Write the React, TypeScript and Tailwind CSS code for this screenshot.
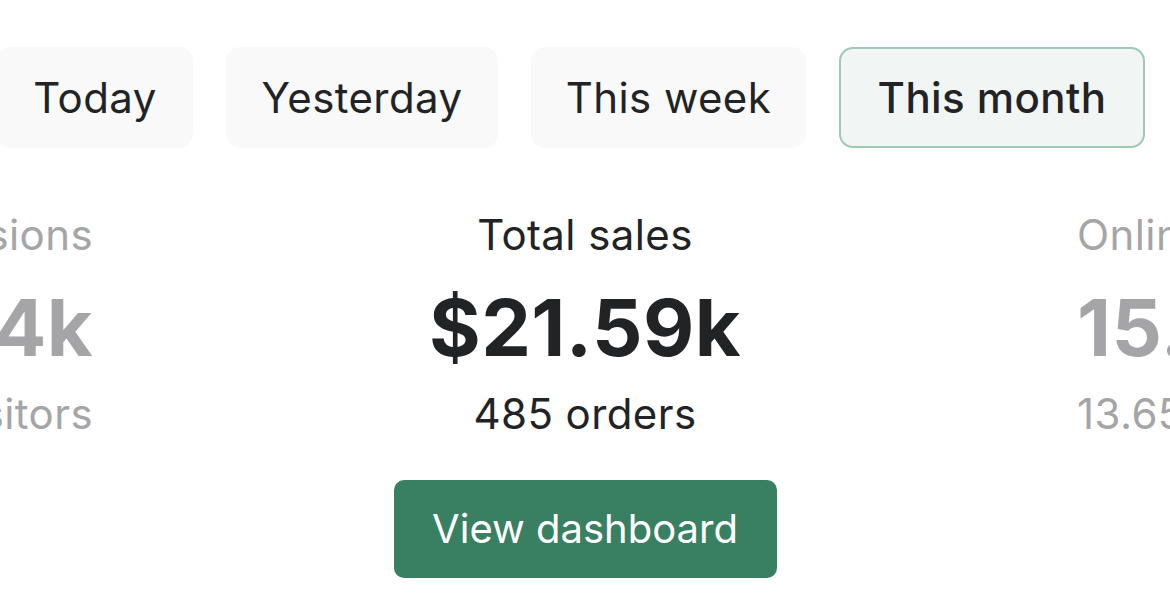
import React, { useState } from 'react';

const ranges = [
  { label: 'Today', width: 'w-[196px]' },
  { label: 'Yesterday', width: 'w-[272px]' },
  { label: 'This week', width: 'w-[275px]' },
  { label: 'This month', width: 'w-[306px]' },
];

const App: React.FC = () => {
  const [active, setActive] = useState('This month');

  return (
    <div
      className="w-[1170px] h-[612px] overflow-hidden bg-white text-[#222325]"
      style={{ fontFamily: 'Inter, "Noto Sans", sans-serif' }}
    >
      <div className="flex gap-[33px] ml-[-3px] mt-[47px]">
        {ranges.map((r) => (
          <button
            key={r.label}
            onClick={() => setActive(r.label)}
            className={`${r.width} h-[101px] shrink-0 rounded-[14px] text-[42px] tracking-[0.01em] leading-none ${
              active === r.label
                ? 'bg-[#f1f6f4] border-2 border-[#9dcab5] font-medium'
                : 'bg-[#f9f9f9] border-2 border-transparent'
            }`}
          >
            {r.label}
          </button>
        ))}
      </div>

      <div className="flex items-start mt-[63px] whitespace-nowrap">
        <div className="w-[93px] shrink-0 flex flex-col items-end text-[#a5a5a7]">
          <div className="text-[42px] tracking-[0.01em] leading-[48px]">Sessions</div>
          <div className="text-[79px] tracking-[0.005em] leading-[80px] font-bold mt-[28px]">2.14k</div>
          <div className="text-[42px] tracking-[0.01em] leading-[48px] mt-[23px]">1.82k visitors</div>
        </div>

        <div className="flex-1 flex flex-col items-center">
          <div className="text-[42px] tracking-[0.01em] leading-[48px]">Total sales</div>
          <div className="text-[79px] tracking-[0.005em] leading-[80px] font-bold mt-[28px]">$21.59k</div>
          <div className="text-[42px] tracking-[0.01em] leading-[48px] mt-[23px]">485 orders</div>
          <button className="mt-[42px] w-[383px] h-[98px] rounded-[10px] bg-[#397f62] text-white text-[40px]">
            View dashboard
          </button>
        </div>

        <div className="w-[93px] shrink-0 flex flex-col items-start text-[#a5a5a7]">
          <div className="text-[42px] tracking-[0.01em] leading-[48px]">Online store</div>
          <div className="text-[79px] tracking-[0.005em] leading-[80px] font-bold mt-[28px]">15.9k</div>
          <div className="text-[42px] tracking-[0.01em] leading-[48px] mt-[23px]">13.65k sessions</div>
        </div>
      </div>
    </div>
  );
};

export default App;
